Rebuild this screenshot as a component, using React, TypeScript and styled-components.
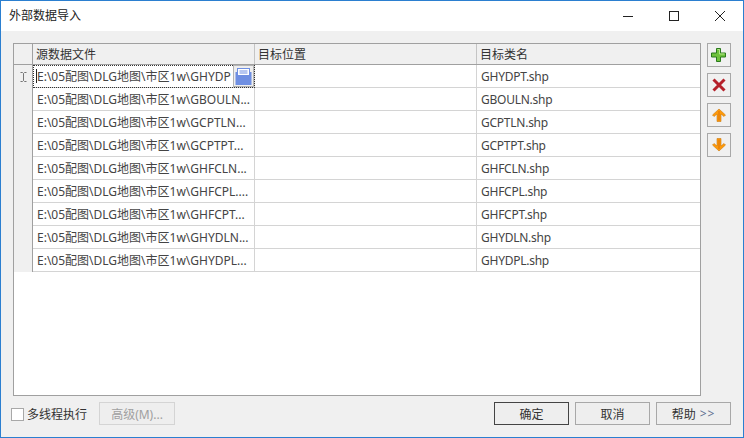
import React from 'react';
import styled, { createGlobalStyle } from 'styled-components';

const FONT = `"Noto Sans", "Noto Sans CJK SC", sans-serif`;

const GlobalStyle = createGlobalStyle`
  html, body {
    margin: 0;
    padding: 0;
    background: #fff;
  }
  * {
    box-sizing: border-box;
  }
`;

const Window = styled.div`
  width: 744px;
  height: 438px;
  display: flex;
  flex-direction: column;
  border: 1px solid #2b7fd0;
  background: #f0f0f0;
  font-family: ${FONT};
  font-size: 12px;
  color: #333;
  overflow: hidden;
`;

const TitleBar = styled.div`
  height: 30px;
  flex: none;
  display: flex;
  align-items: center;
  background: #fff;
  padding-left: 8px;
`;

const Title = styled.div`
  flex: 1;
  color: #222;
  padding-bottom: 2px;
`;

const WinButton = styled.div`
  width: 46px;
  height: 30px;
  display: flex;
  align-items: center;
  justify-content: center;
`;

const Body = styled.div`
  flex: 1;
  display: flex;
  align-items: flex-start;
  padding: 12px 12px 0 12px;
  gap: 6px;
`;

const Grid = styled.div`
  width: 688px;
  height: 353px;
  flex: none;
  background: #fff;
  border: 1px solid #a0a0a0;
  display: flex;
  flex-direction: column;
`;

const Row = styled.div`
  display: grid;
  grid-template-columns: 19px 222px 222px 1fr;
  height: 23px;
  flex: none;
`;

const HeaderRow = styled(Row)`
  height: 21px;
  background: #f0f0f0;
  border-bottom: 1px solid #a0a0a0;
`;

const HeaderCell = styled.div`
  display: flex;
  align-items: center;
  padding-left: 3px;
  border-right: 1px solid #c4c4c4;
  color: #333;
  white-space: nowrap;
  &:first-child {
    border-right-color: #a0a0a0;
  }
  &:last-child {
    border-right: 0;
  }
`;

const RowHead = styled.div`
  background: #f0f0f0;
  border-right: 1px solid #a0a0a0;
  display: flex;
  align-items: center;
  justify-content: center;
`;

const Cell = styled.div`
  display: flex;
  align-items: center;
  padding-left: 4px;
  border-right: 1px solid #d4d4d4;
  border-bottom: 1px solid #d4d4d4;
  white-space: nowrap;
  overflow: hidden;
  color: #444;
  &:last-child {
    border-right: 0;
  }
`;

const NameCell = styled(Cell)`
  letter-spacing: -0.25px;
`;

const EditCell = styled(Cell)`
  position: relative;
  padding-left: 3px;
  outline: 1px dotted #333;
  outline-offset: -1px;
`;

const Caret = styled.span`
  width: 1px;
  height: 14px;
  background: #222;
`;

const BrowseButton = styled.div`
  position: absolute;
  right: 0;
  top: 0;
  width: 21px;
  height: 22px;
  background: #eee;
  border: 1px solid #b4b4b4;
  display: flex;
  align-items: center;
  justify-content: center;
`;

const SideBar = styled.div`
  display: flex;
  flex-direction: column;
  gap: 6px;
`;

const SideButton = styled.div`
  width: 24px;
  height: 24px;
  background: #f0f0f0;
  border: 1px solid #a8a8a8;
  display: flex;
  align-items: center;
  justify-content: center;
`;

const Footer = styled.div`
  height: 41px;
  flex: none;
  display: flex;
  align-items: flex-start;
  padding: 6px 12px 0 10px;
`;

const CheckLabel = styled.label`
  display: flex;
  align-items: center;
  gap: 3px;
  height: 24px;
  margin-right: 12px;
  width: 76px;
  white-space: nowrap;
`;

const CheckBox = styled.span`
  width: 13px;
  height: 13px;
  background: #fff;
  border: 1px solid #a8a8a8;
  flex: none;
`;

const Button = styled.div<{ $primary?: boolean; $disabled?: boolean }>`
  width: ${p => (p.$disabled ? '76px' : '75px')};
  height: 23px;
  display: flex;
  align-items: center;
  justify-content: center;
  background: #eee;
  border: 1px solid ${p => (p.$primary ? '#444' : p.$disabled ? '#d4d4d4' : '#a8a8a8')};
  color: ${p => (p.$disabled ? '#a0a0a0' : '#333')};
  white-space: pre;
`;

const Chevrons = styled.span`
  color: #5f6f90;
  margin-left: 4px;
  letter-spacing: 1px;
`;

const Spacer = styled.div`
  flex: 1;
`;

const ButtonGroup = styled.div`
  display: flex;
  gap: 6px;
`;

const rows = [
  ['E:\\05配图\\DLG地图\\市区1w\\GHYDP', 'GHYDPT.shp'],
  ['E:\\05配图\\DLG地图\\市区1w\\GBOULN...', 'GBOULN.shp'],
  ['E:\\05配图\\DLG地图\\市区1w\\GCPTLN...', 'GCPTLN.shp'],
  ['E:\\05配图\\DLG地图\\市区1w\\GCPTPT...', 'GCPTPT.shp'],
  ['E:\\05配图\\DLG地图\\市区1w\\GHFCLN...', 'GHFCLN.shp'],
  ['E:\\05配图\\DLG地图\\市区1w\\GHFCPL....', 'GHFCPL.shp'],
  ['E:\\05配图\\DLG地图\\市区1w\\GHFCPT...', 'GHFCPT.shp'],
  ['E:\\05配图\\DLG地图\\市区1w\\GHYDLN...', 'GHYDLN.shp'],
  ['E:\\05配图\\DLG地图\\市区1w\\GHYDPL...', 'GHYDPL.shp'],
];

const MinIcon = () => (
  <svg width="12" height="12" viewBox="0 0 12 12">
    <path d="M1 6.5h10" stroke="#222" fill="none" />
  </svg>
);
const MaxIcon = () => (
  <svg width="12" height="12" viewBox="0 0 12 12">
    <rect x="1.5" y="1.5" width="9" height="9" stroke="#222" fill="none" />
  </svg>
);
const CloseIcon = () => (
  <svg width="12" height="12" viewBox="0 0 12 12">
    <path d="M1 1l10 10M11 1L1 11" stroke="#222" fill="none" />
  </svg>
);

const CursorIcon = () => (
  <svg width="7" height="10" viewBox="0 0 7 10">
    <path d="M0.5 0.5h2l1 1 1-1h2M3.5 1.5v7M0.5 9.5h2l1-1 1 1h2" stroke="#777" fill="none" />
  </svg>
);
const PlusIcon = () => (
  <svg width="16" height="16" viewBox="0 0 16 16">
    <path d="M5.5 1.5h4v4.5h5v4h-5v4.5h-4V10h-5V6h5z" fill="#6fc23c" stroke="#2a7a1c" />
    <path d="M6.5 2.5h2v4.5h5" stroke="#b4e68c" fill="none" />
  </svg>
);
const CrossIcon = () => (
  <svg width="16" height="16" viewBox="0 0 16 16">
    <path d="M2.5 2.5l11 11M13.5 2.5l-11 11" stroke="#b5202a" strokeWidth="3" fill="none" />
  </svg>
);
const UpIcon = () => (
  <svg width="16" height="16" viewBox="0 0 16 16">
    <path d="M8 2l6.5 6-1.5 1.5-3-2.5v7.5H6V7L3 9.5 1.5 8z" fill="#ff9a0a" stroke="#c97a10" strokeWidth="0.6" />
    <path d="M8 4v9.5" stroke="#d9720a" strokeWidth="1" fill="none" />
  </svg>
);
const DownIcon = () => (
  <svg width="16" height="16" viewBox="0 0 16 16">
    <path d="M8 14l6.5-6L13 6.5 10 9V1.5H6V9L3 6.5 1.5 8z" fill="#ff9a0a" stroke="#c97a10" strokeWidth="0.6" />
    <path d="M8 2.5V12" stroke="#d9720a" strokeWidth="1" fill="none" />
  </svg>
);
const BrowseIcon = () => (
  <svg width="17" height="18" viewBox="0 0 17 18">
    <path d="M0.5 5h16v13H0.5z" fill="#6f8fe2" />
    <rect x="2.5" y="1.5" width="12" height="7" fill="#fff" stroke="#6f8fe2" />
    <path d="M4.5 4h8M4.5 6h8" stroke="#6f8fe2" />
  </svg>
);

const App: React.FC = () => (
  <>
    <GlobalStyle />
    <Window>
      <TitleBar>
        <Title>外部数据导入</Title>
        <WinButton><MinIcon /></WinButton>
        <WinButton><MaxIcon /></WinButton>
        <WinButton><CloseIcon /></WinButton>
      </TitleBar>
      <Body>
        <Grid>
          <HeaderRow>
            <HeaderCell />
            <HeaderCell>源数据文件</HeaderCell>
            <HeaderCell>目标位置</HeaderCell>
            <HeaderCell>目标类名</HeaderCell>
          </HeaderRow>
          {rows.map(([path, name], i) => (
            <Row key={name}>
              <RowHead>{i === 0 && <CursorIcon />}</RowHead>
              {i === 0 ? (
                <EditCell>
                  <Caret />
                  {path}
                  <BrowseButton><BrowseIcon /></BrowseButton>
                </EditCell>
              ) : (
                <Cell>{path}</Cell>
              )}
              <Cell />
              <NameCell>{name}</NameCell>
            </Row>
          ))}
        </Grid>
        <SideBar>
          <SideButton><PlusIcon /></SideButton>
          <SideButton><CrossIcon /></SideButton>
          <SideButton><UpIcon /></SideButton>
          <SideButton><DownIcon /></SideButton>
        </SideBar>
      </Body>
      <Footer>
        <CheckLabel>
          <CheckBox />
          多线程执行
        </CheckLabel>
        <Button $disabled>高级(M)...</Button>
        <Spacer />
        <ButtonGroup>
          <Button $primary>确定</Button>
          <Button>取消</Button>
          <Button>帮助<Chevrons>&gt;&gt;</Chevrons></Button>
        </ButtonGroup>
      </Footer>
    </Window>
  </>
);

export default App;
